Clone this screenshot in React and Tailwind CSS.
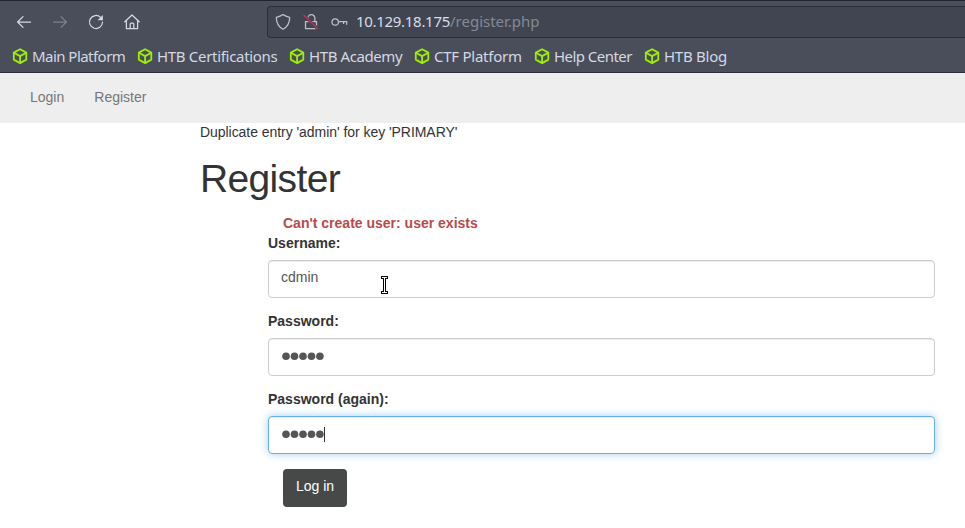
import React from "react";

const bookmarks = [
  { label: "Main Platform", width: "w-[125px]", spacing: "tracking-[-0.54px]" },
  { label: "HTB Certifications", width: "w-[152px]", spacing: "tracking-[-0.31px]" },
  { label: "HTB Academy", width: "w-[125px]", spacing: "tracking-[-0.41px]" },
  { label: "CTF Platform", width: "w-[120px]", spacing: "tracking-[-0.25px]" },
  { label: "Help Center", width: "w-[110px]", spacing: "tracking-[-0.54px]" },
  { label: "HTB Blog", width: "w-[100px]", spacing: "tracking-[-0.26px]" },
];

function Icon({ children, className = "" }) {
  return (
    <svg
      viewBox="0 0 16 16"
      className={`h-4 w-4 shrink-0 ${className}`}
      fill="none"
      stroke="currentColor"
      strokeWidth="1.25"
      strokeLinecap="round"
      strokeLinejoin="round"
    >
      {children}
    </svg>
  );
}

function CubeIcon() {
  return (
    <svg
      viewBox="0 0 16 16"
      className="h-4 w-4 shrink-0 text-[#9fef00]"
      fill="none"
      stroke="currentColor"
      strokeWidth="1.8"
      strokeLinejoin="round"
    >
      <path d="M8.1 1.2 14.3 4.6V11.6L8.1 15.1 1.8 11.6V4.6Z" />
      <path d="M1.9 4.8 8.1 8.1l6.2-3.3M8.1 8.1v6.8" />
    </svg>
  );
}

function BrowserChrome() {
  return (
    <header className="h-[73px] border-t border-b border-t-[#23252e] border-b-[#2b2d39] bg-[#4a4d5a] font-['Noto_Sans',sans-serif] text-[#d3dae3]">
      <div className="flex h-[39px] items-center pt-[2px]">
        <div className="flex w-[267px] items-center gap-5 pl-4">
          <Icon>
            <path d="M14.5 8H1.6M7 2.6 1.6 8 7 13.4" />
          </Icon>
          <Icon className="text-[#7f838e]">
            <path d="M1.5 8h12.9M9 2.6 14.4 8 9 13.4" />
          </Icon>
          <Icon>
            <path d="M12.6 3.4A6.5 6.5 0 1 0 14.5 8.2" />
            <path d="M14.9 1v5.2H9.6Z" fill="currentColor" stroke="none" />
          </Icon>
          <Icon>
            <path d="M.8 7.8 8 1 15.2 7.8M2.4 6.8v7.8h11.2V6.8M6.2 14.4V10q0-.9.9-.9h1.8q.9 0 .9.9v4.4" />
          </Icon>
        </div>
        <div className="flex h-8 flex-1 items-center rounded-l border border-r-0 border-[#2b2e3a] bg-[#414551] pl-[7px]">
          <Icon className="text-[#bcc2cc]">
            <path d="M8 .6C9.9 2.2 12 2.9 14.7 3.3 14.7 9 12.5 12.9 8 15.3 3.5 12.9 1.3 9 1.3 3.3 4 2.9 6.1 2.2 8 .6Z" />
          </Icon>
          <Icon className="ml-3 text-[#bcc2cc]">
            <path d="M4.9 4.2a3.5 3.5 0 0 1 7 0v3.2M2.5 7.6h11v6.9h-11Z" />
            <path d="M1 1.3 14.8 14.9" stroke="#414551" strokeWidth="3" />
            <path d="M1 1.3 14.8 14.9" stroke="#e22850" />
          </Icon>
          <svg
            viewBox="0 0 17 16"
            className="ml-3 h-4 w-[17px] text-[#bcc2cc]"
            fill="none"
            stroke="currentColor"
            strokeWidth="1.25"
          >
            <circle cx="4.2" cy="8" r="3.2" />
            <path d="M7.4 7.6h8.3v3.1M12.6 7.6v2.3" />
          </svg>
          <span className="ml-2 pb-px text-[15px] leading-5 whitespace-nowrap text-[#d8dde6]">
            <span className="tracking-[-0.3px]">10.129.18.175</span>
            <span className="text-[#858994]">/register.php</span>
          </span>
        </div>
      </div>
      <div className="flex h-8 items-center pl-3">
        {bookmarks.map((b) => (
          <div key={b.label} className={`flex shrink-0 items-center gap-1 ${b.width}`}>
            <CubeIcon />
            <span className={`text-[15px] leading-5 whitespace-nowrap ${b.spacing}`}>{b.label}</span>
          </div>
        ))}
      </div>
    </header>
  );
}

function Dots() {
  return (
    <svg viewBox="0 0 43 10" className="mb-[2px] h-[10px] w-[43px] fill-[#555]">
      {[5, 13.5, 22, 30.5, 38.9].map((x) => (
        <circle key={x} cx={x} cy="5.3" r="3.8" />
      ))}
    </svg>
  );
}

function Field({ label, focused, children }) {
  return (
    <div className="mb-[13px]">
      <div className="mb-[7px] text-[14px] leading-5 font-bold">{label}</div>
      <div
        className={
          focused
            ? "flex h-[38px] items-center rounded border border-[#66afe9] pl-3 shadow-[inset_0_1px_1px_rgba(0,0,0,0.075),0_0_8px_rgba(102,175,233,0.6)]"
            : "flex h-[38px] items-center rounded border border-[#ccc] pl-3 shadow-[inset_0_1px_1px_rgba(0,0,0,0.075)]"
        }
      >
        {children}
      </div>
    </div>
  );
}

function TextCursor() {
  return (
    <svg viewBox="0 0 8 18" className="absolute top-[276px] left-[381px] h-[18px] w-[8px]">
      <path d="M0 1.5h7M0 16.5h7M3.5 2v14" fill="none" stroke="#000" strokeWidth="3" />
      <path d="M1 1.5h5M1 16.5h5M3.5 1.5v15" fill="none" stroke="#fff" strokeWidth="1" />
    </svg>
  );
}

export default function App() {
  return (
    <div className="relative h-[528px] w-[965px] overflow-hidden bg-white font-['Liberation_Sans',sans-serif] text-[14px] leading-5 text-[#333]">
      <BrowserChrome />
      <nav className="flex h-[50px] items-center gap-[30px] bg-[#eee] pb-[2px] pl-[30px] text-[#777]">
        <span>Login</span>
        <span>Register</span>
      </nav>
      <main className="pl-[200px]">
        <p className="-mt-[1px] tracking-[-0.05px]">Duplicate entry 'admin' for key 'PRIMARY'</p>
        <h1 className="mt-[15px] text-[39px] leading-[43px] tracking-[-0.65px]">Register</h1>
        <div className="mt-[13px] mr-[30px] ml-[68px]">
          <p className="pl-[15px] font-bold text-[#b94a48]">Can't create user: user exists</p>
          <Field label="Username:">
            <span className="pb-[4px] text-[#555]">cdmin</span>
          </Field>
          <Field label="Password:">
            <Dots />
          </Field>
          <Field label="Password (again):" focused>
            <Dots />
            <span className="mb-[2px] h-[15px] w-px bg-[#333]" />
          </Field>
          <button className="mt-[15px] ml-[15px] block h-[38px] w-16 rounded bg-[#474949] pb-[4px] text-white">
            Log in
          </button>
        </div>
      </main>
      <TextCursor />
    </div>
  );
}
